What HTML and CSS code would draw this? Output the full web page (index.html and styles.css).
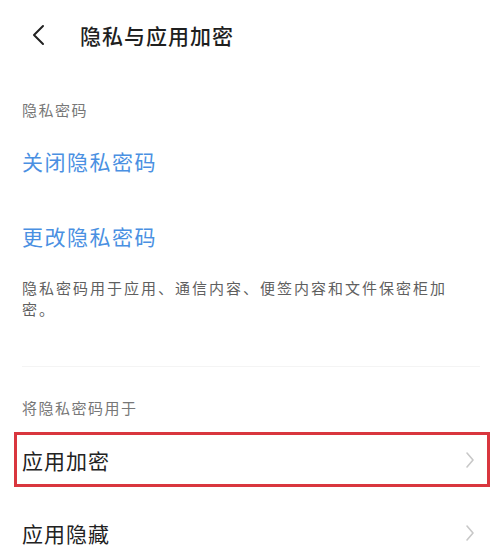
FILE: index.html
```html
<!DOCTYPE html>
<html lang="zh-CN">
<head>
    <meta charset="UTF-8">
    <meta name="viewport" content="width=device-width, initial-scale=1.0">
    <title>隐私与应用加密</title>
    <link rel="stylesheet" href="styles.css">
</head>
<body>
    <div class="page">
        <!-- Top bar -->
        <div class="topbar">
            <svg class="back" width="14" height="22" viewBox="0 0 14 22">
                <path d="M12 2 L3 11 L12 20" fill="none" stroke="#222" stroke-width="2" stroke-linecap="round" stroke-linejoin="round"/>
            </svg>
            <span class="title">隐私与应用加密</span>
        </div>

        <!-- Privacy password -->
        <div class="label">隐私密码</div>
        <div class="links">
            <div class="link">关闭隐私密码</div>
            <div class="link">更改隐私密码</div>
        </div>
        <p class="desc">隐私密码用于应用、通信内容、便签内容和文件保密柜加密。</p>

        <div class="divider"></div>

        <!-- Uses -->
        <div class="label">将隐私密码用于</div>
        <div class="list">
            <div class="row highlighted">
                <span class="row-text">应用加密</span>
                <svg class="chev" width="10" height="18" viewBox="0 0 10 18">
                    <path d="M2 2 L8 9 L2 16" fill="none" stroke="#c8c8c8" stroke-width="1.6" stroke-linecap="round" stroke-linejoin="round"/>
                </svg>
                <div class="mark"></div>
            </div>
            <div class="row">
                <span class="row-text">应用隐藏</span>
                <svg class="chev" width="10" height="18" viewBox="0 0 10 18">
                    <path d="M2 2 L8 9 L2 16" fill="none" stroke="#c8c8c8" stroke-width="1.6" stroke-linecap="round" stroke-linejoin="round"/>
                </svg>
            </div>
        </div>
    </div>
</body>
</html>
```

FILE: styles.css
```css
body {
    margin: 0;
    background: #fff;
    font-family: "Noto Sans CJK SC", "Noto Sans", sans-serif;
    color: #222;
}

.page {
    width: 500px;
    height: 552px;
    overflow: hidden;
}

.topbar {
    height: 70px;
    display: flex;
    align-items: center;
    padding-left: 31px;
}

.title {
    margin-left: 35px;
    font-size: 21px;
    letter-spacing: 1px;
    font-weight: 500;
    color: #1f1f1f;
}

.label {
    padding-left: 22px;
    font-size: 15px;
    line-height: 20px;
    letter-spacing: 1.5px;
    color: #777;
    margin-top: 30px;
}

.links {
    margin-top: 3px;
}

.link {
    height: 75px;
    display: flex;
    align-items: center;
    padding-left: 22px;
    font-size: 21px;
    letter-spacing: 1.5px;
    color: #4a90e2;
}

.desc {
    margin: 4px 0 0;
    padding: 0 48px 0 22px;
    font-size: 15px;
    line-height: 21px;
    letter-spacing: 2px;
    color: #5f5f5f;
}

.divider {
    margin: 47px 20px 0 22px;
    border-top: 1px solid #f4f4f4;
}

.divider + .label {
    margin-top: 31px;
}

.list {
    margin-top: 5px;
}

.row {
    position: relative;
    height: 73px;
    display: flex;
    align-items: center;
    justify-content: space-between;
    padding: 0 25px 0 22px;
}

.row-text {
    font-size: 21px;
    letter-spacing: 1px;
    color: #222;
}

.mark {
    position: absolute;
    left: 14px;
    right: 10px;
    top: 9px;
    bottom: 9px;
    border: 3px solid #d9363e;
}
```
